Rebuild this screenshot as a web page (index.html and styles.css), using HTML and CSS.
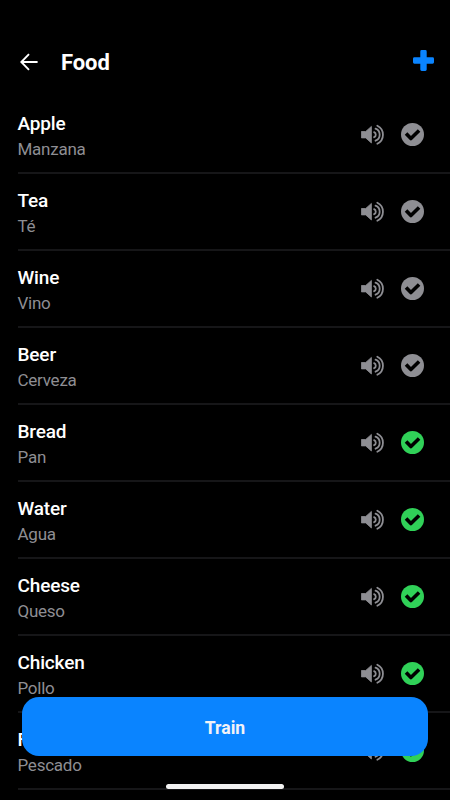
FILE: index.html
```
<!DOCTYPE html>
<html lang="en">
<head>
<meta charset="utf-8">
<title>Food</title>
<link rel="stylesheet" href="styles.css">
</head>
<body>
<svg class="defs" aria-hidden="true">
  <symbol id="sound" viewBox="0 0 24 22">
    <path d="M.4 7.5h4.3L10.4 2.4V19L4.7 13.9H.4z" fill="currentColor" stroke="currentColor" stroke-width=".8" stroke-linejoin="round"/>
    <path d="M13.1 8.2a2.7 2.7 0 0 1 0 5M14.5 4.7a6.4 6.4 0 0 1 0 12M16.3 1.7a10 10 0 0 1 0 18" fill="none" stroke="currentColor" stroke-width="1.8" stroke-linecap="round"/>
  </symbol>
  <symbol id="check" viewBox="0 0 23 23">
    <circle cx="11.5" cy="11.5" r="11.5" fill="currentColor"/>
    <path d="M6.3 11.8l3.6 3.7 6.9-6.8" fill="none" stroke="#000" stroke-width="3.6" stroke-linecap="square" stroke-linejoin="round"/>
  </symbol>
</svg>
<div class="screen">
  <header class="header">
    <svg class="back" viewBox="0 0 18 18"><path d="M17.6 9H1.5M9 1.2 1.3 9 9 16.8" fill="none" stroke="#fff" stroke-width="1.9"/></svg>
    <h1 class="title">Food</h1>
    <svg class="plus" viewBox="0 0 21 21"><path d="M8.7 0h3.6a1.4 1.4 0 0 1 1.4 1.4v5.9h5.9A1.4 1.4 0 0 1 21 8.7v3.6a1.4 1.4 0 0 1-1.4 1.4h-5.9v5.9a1.4 1.4 0 0 1-1.4 1.4H8.7a1.4 1.4 0 0 1-1.4-1.4v-5.9H1.4A1.4 1.4 0 0 1 0 12.3V8.7a1.4 1.4 0 0 1 1.4-1.4h5.9V1.4A1.4 1.4 0 0 1 8.7 0z" fill="#0a84ff"/></svg>
  </header>
  <ul class="list">
    <li class="row"><div class="words"><div class="word">Apple</div><div class="translation">Manzana</div></div><svg class="sound"><use href="#sound"/></svg><svg class="check"><use href="#check"/></svg></li>
    <li class="row"><div class="words"><div class="word">Tea</div><div class="translation">Té</div></div><svg class="sound"><use href="#sound"/></svg><svg class="check"><use href="#check"/></svg></li>
    <li class="row"><div class="words"><div class="word">Wine</div><div class="translation">Vino</div></div><svg class="sound"><use href="#sound"/></svg><svg class="check"><use href="#check"/></svg></li>
    <li class="row"><div class="words"><div class="word">Beer</div><div class="translation">Cerveza</div></div><svg class="sound"><use href="#sound"/></svg><svg class="check"><use href="#check"/></svg></li>
    <li class="row"><div class="words"><div class="word">Bread</div><div class="translation">Pan</div></div><svg class="sound"><use href="#sound"/></svg><svg class="check done"><use href="#check"/></svg></li>
    <li class="row"><div class="words"><div class="word">Water</div><div class="translation">Agua</div></div><svg class="sound"><use href="#sound"/></svg><svg class="check done"><use href="#check"/></svg></li>
    <li class="row"><div class="words"><div class="word">Cheese</div><div class="translation">Queso</div></div><svg class="sound"><use href="#sound"/></svg><svg class="check done"><use href="#check"/></svg></li>
    <li class="row"><div class="words"><div class="word">Chicken</div><div class="translation">Pollo</div></div><svg class="sound"><use href="#sound"/></svg><svg class="check done"><use href="#check"/></svg></li>
    <li class="row"><div class="words"><div class="word">Fish</div><div class="translation">Pescado</div></div><svg class="sound"><use href="#sound"/></svg><svg class="check done"><use href="#check"/></svg></li>
  </ul>
  <button class="train">Train</button>
  <div class="home-bar"></div>
</div>
</body>
</html>
```

FILE: styles.css
```
* { box-sizing: border-box; }
body {
  margin: 0;
  background: #000;
  color: #fff;
  font-family: Roboto, "Liberation Sans", sans-serif;
}
.defs { position: absolute; width: 0; height: 0; }
.screen {
  position: relative;
  width: 450px;
  height: 800px;
  overflow: hidden;
}
.header {
  display: flex;
  align-items: center;
  height: 96px;
  padding: 28px 16px 0 20px;
}
.back { width: 18px; height: 18px; margin-bottom: 1px; }
.title {
  flex: 1;
  margin: 2px 0 0 23px;
  font-size: 22px;
  font-weight: 700;
  line-height: 26px;
  letter-spacing: -0.1px;
}
.plus { width: 21px; height: 21px; margin-bottom: 3px; }
.list { list-style: none; margin: 0 0 0 17.5px; padding: 0; }
.row {
  display: flex;
  align-items: center;
  height: 77px;
  padding-right: 26px;
  border-bottom: 2px solid #161618;
}
.row:first-child { height: 78px; padding-top: 1px; }
.words { flex: 1; padding-top: 3px; }
.word { font-size: 19px; font-weight: 500; line-height: 26px; letter-spacing: -0.15px; }
.translation { color: #8e8e93; font-size: 17px; line-height: 25px; letter-spacing: -0.25px; }
.sound { width: 24px; height: 22px; margin-right: 16px; color: #8e8e93; }
.check { width: 23px; height: 23px; color: #8e8e93; }
.check.done { color: #30d158; }
.train {
  position: absolute;
  left: 22px;
  top: 697px;
  width: 406px;
  height: 59px;
  padding: 2px 0 0;
  border: 0;
  border-radius: 17px;
  background: #0a84ff;
  color: #f2f2f7;
  font: 700 17.6px Roboto, "Liberation Sans", sans-serif;
}
.home-bar {
  position: absolute;
  left: 166px;
  top: 784px;
  width: 118px;
  height: 5px;
  border-radius: 3px;
  background: #f2f2f2;
}
```
